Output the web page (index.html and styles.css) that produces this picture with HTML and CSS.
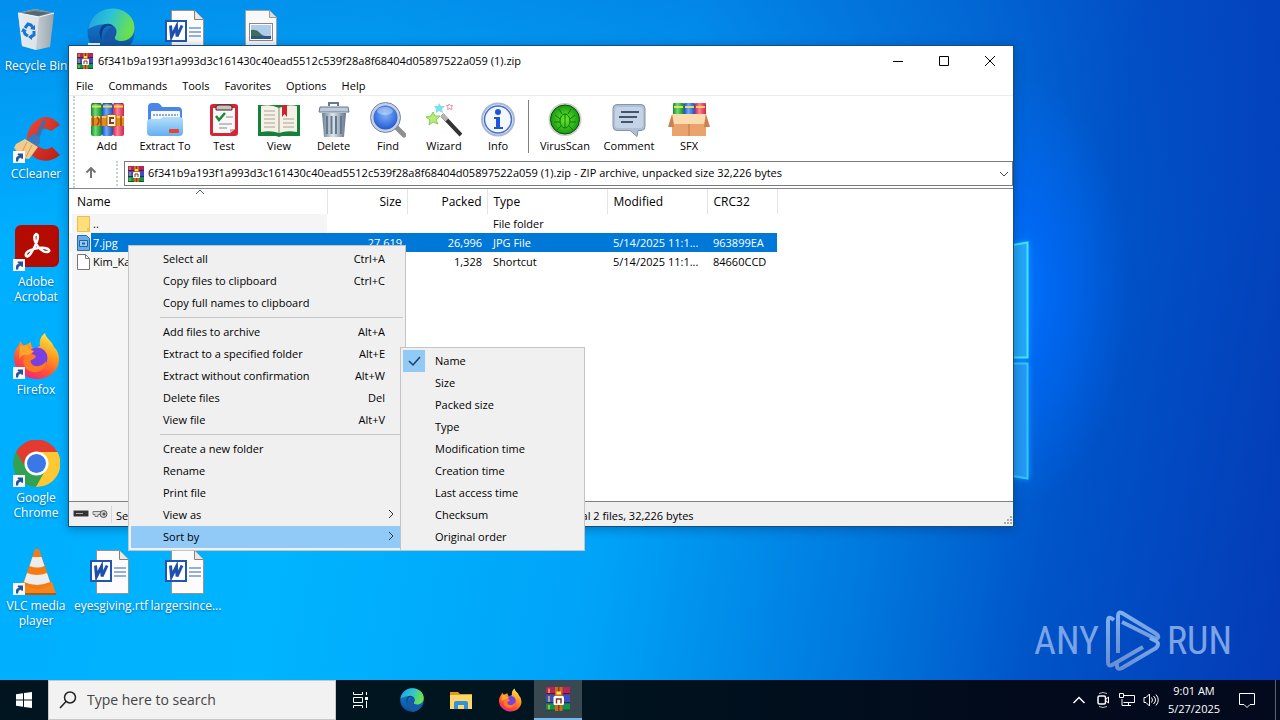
FILE: index.html
```html
<!DOCTYPE html>
<html lang="en">
<head>
<meta charset="utf-8">
<title>Desktop</title>
<link rel="stylesheet" href="styles.css">
</head>
<body>
<svg class="defs" width="0" height="0" aria-hidden="true">
  <defs>
    <linearGradient id="gEdgeA" x1="0" y1="0" x2="1" y2="0.3"><stop offset="0" stop-color="#1b9de2"/><stop offset=".5" stop-color="#2cc3d5"/><stop offset="1" stop-color="#6be04e"/></linearGradient>
    <linearGradient id="gEdgeB" x1="0" y1="0" x2="0" y2="1"><stop offset="0" stop-color="#1683d8"/><stop offset="1" stop-color="#0c4f9e"/></linearGradient>
    <linearGradient id="gFox" x1=".8" y1="0" x2=".3" y2="1"><stop offset="0" stop-color="#fff04a"/><stop offset=".4" stop-color="#ff9a1f"/><stop offset=".75" stop-color="#ff4a3c"/><stop offset="1" stop-color="#e8258a"/></linearGradient>
    <linearGradient id="gFolder" x1="0" y1="0" x2="0" y2="1"><stop offset="0" stop-color="#b5defc"/><stop offset="1" stop-color="#64b0f2"/></linearGradient>
    <linearGradient id="gMetal" x1="0" y1="0" x2="1" y2="0"><stop offset="0" stop-color="#6b7f93"/><stop offset=".45" stop-color="#dde7ef"/><stop offset="1" stop-color="#62758a"/></linearGradient>
    <radialGradient id="gLens" cx=".5" cy=".4" r=".6"><stop offset="0" stop-color="#7db4fb"/><stop offset="1" stop-color="#1b4fd0"/></radialGradient>
    <radialGradient id="gVirus"><stop offset="0" stop-color="#6dea2e"/><stop offset="1" stop-color="#12940f"/></radialGradient>
    <linearGradient id="gRed" x1="0" y1="0" x2="1" y2="1"><stop offset="0" stop-color="#f04a3a"/><stop offset="1" stop-color="#b71c13"/></linearGradient>
    <linearGradient id="gBin" x1="0" y1="0" x2="1" y2="0"><stop offset="0" stop-color="#dfe6ea"/><stop offset=".6" stop-color="#bcc6cc"/><stop offset="1" stop-color="#98a4ac"/></linearGradient>
    <linearGradient id="gMark" x1="0" y1="0" x2="0" y2="1"><stop offset="0" stop-color="#7fb0ee"/><stop offset="1" stop-color="#688fd4"/></linearGradient>
    <linearGradient id="gBookG" x1="0" y1="0" x2="1" y2="0"><stop offset="0" stop-color="#0f8a35"/><stop offset=".4" stop-color="#6bdc72"/><stop offset="1" stop-color="#0e8434"/></linearGradient>
    <linearGradient id="gBookB" x1="0" y1="0" x2="1" y2="0"><stop offset="0" stop-color="#1a4fc0"/><stop offset=".4" stop-color="#6fa9f6"/><stop offset="1" stop-color="#1d4fb8"/></linearGradient>
    <linearGradient id="gBookR" x1="0" y1="0" x2="1" y2="0"><stop offset="0" stop-color="#d4264a"/><stop offset=".4" stop-color="#f8829a"/><stop offset="1" stop-color="#d02546"/></linearGradient>
  </defs>

  <symbol id="rar" viewBox="0 0 16 16">
    <rect x="0" y="0" width="16" height="5" fill="#b8235a"/><rect x="0" y="4" width="16" height="1" fill="#6c1238"/>
    <rect x="0" y="5" width="16" height="6" fill="#3c4fc0"/><rect x="0" y="10" width="16" height="1" fill="#232a72"/>
    <rect x="0" y="11" width="16" height="5" fill="#15914a"/><rect x="0" y="15" width="16" height="1" fill="#0a5a2c"/>
    <path d="M2 1v3M2 6v4M2 12v3" stroke="#d8c23c" stroke-width="1"/>
    <rect x="6" y="0" width="5" height="16" fill="#c96c1e"/><path d="M8.500 0v4M8.500 12v4" stroke="#8c3b10"/>
    <rect x="5" y="6" width="7" height="6" rx="1" fill="#fff"/><path d="M7 11V8h3v3" fill="none" stroke="#8c2f1d" stroke-width="1"/><path d="M7 4h3" stroke="#fbe14a" stroke-width="2"/>
  </symbol>
  <symbol id="arrow" viewBox="0 0 12 12"><rect width="12" height="12" fill="#f8f8f8"/><path d="M3 10.500V8q0-3 3-3L4.500 3.500 5 2.500h5v5l-1 .5L7.500 6.500Q5 7.500 5 10.500z" fill="#24529c"/></symbol>
  <symbol id="edge" viewBox="0 0 48 48">
    <circle cx="24" cy="24" r="23.500" fill="url(#gEdgeB)"/>
    <path d="M1 21C3 9 13 .5 25 .5 38 .5 47.500 9 47.500 20c0 8-6 13-13 13-5 0-7-2-7-4 0-2 2-3 2-6 0-4-4-7-9-7C9 16 1 21 1 21z" fill="url(#gEdgeA)"/>
    <path d="M17 31c0-6 4-10 8-12 4 2 5 5 4 8-2 3-3 8 5 9 5 .5 8-1 11-3C40 43 32 47.500 26 47.500 20 45 17 39 17 31z" fill="#1559a8"/>
    <path d="M29 23q-3-6-9-5-7 3-5 15-5-9 0-15 5-4 10-1z" fill="#0a3f8c"/>
  </symbol>
  <symbol id="fox" viewBox="0 0 48 48">
    <path d="M47 27c0 12-10 20-22 20S2 38 2 26c0-6 2-10 5-13l1-4 4 5 7-4q-1 5 4 7l5-3c-1-6 1-10 5-13 1 5 5 7 7 10l2 4q5 5 5 12z" fill="url(#gFox)"/>
    <circle cx="25" cy="26" r="10.500" fill="#7a3fe0"/><path d="M13 23c4-3 8-1 11 1-1 4-7 3-5 7 3 5 11 4 15-2 0 9-7 12-13 11-8-1-12-9-8-17z" fill="#ff7a22"/>
    <path d="M8 14l7-1q1 4 7 6-3 4-7 4-5-1-8 4z" fill="#ffa42c"/>
  </symbol>
  <symbol id="word" viewBox="0 0 48 48">
    <path d="M13.500 2.500h23l9 9v34h-32z" fill="#fcfcfc" stroke="#9b9188"/><path d="M36.500 2.500v9h9" fill="#e8e8e8" stroke="#8c7f76"/>
    <path d="M31 20h12M31 24h12M31 28h12" stroke="#2f63b8" stroke-width="1"/>
    <rect x="8" y="13" width="20" height="20" fill="#fff" stroke="#2255b0" stroke-width="2"/>
    <path d="M12.500 17.500l1 11 5-10 .5 10 5-11" fill="none" stroke="#1d4fae" stroke-width="3"/>
  </symbol>
  <symbol id="books" viewBox="0 0 36 36">
    <rect x="2" y="1" width="11" height="33" rx="2" fill="url(#gBookG)"/><rect x="13" y="1" width="11" height="33" rx="2" fill="url(#gBookB)"/><rect x="24" y="1" width="11" height="33" rx="2" fill="url(#gBookR)"/>
    <path d="M3 4.500h9M14 4.500h9M25 4.500h9" stroke="#f3dc4d" stroke-width="2"/><path d="M3 1.500h9M14 1.500h9M25 1.500h9" stroke="#00000055"/>
    <path d="M2 14h33v10H2z" fill="#e08a20"/><path d="M2 15h33" stroke="#f9c55c" stroke-width="2"/><path d="M4 14v10M8 15q4 4 0 8M12 14v10M32 14v10" fill="none" stroke="#8f4a0a" stroke-width="1.500"/>
    <rect x="18" y="12.500" width="9" height="12" rx="1" fill="#fff3dc" stroke="#a85a10"/><path d="M25 16h-4v5h4" fill="none" stroke="#8d420e" stroke-width="2"/>
  </symbol>
</svg>

<div class="screen">
<main class="desktop">
  <svg class="glow" viewBox="0 0 16 240" aria-hidden="true">
    <path d="M0 4L15 1v116H0z" fill="#24a6f8"/><path d="M0 4L14.500 1.500V116.500H0" fill="none" stroke="#3fe4ff" stroke-width="2"/>
    <path d="M0 122h15v116L0 236z" fill="#2398f5"/><path d="M0 122.500h14.500V237.500L0 235" fill="none" stroke="#2fc6fa" stroke-width="2"/>
  </svg>

  <div class="icons">
    <div class="shortcut c1 r1"><svg class="pic" viewBox="0 0 48 48">
      <path d="M6 5l17-4 19 4-4 34-14 3-14-4z" fill="url(#gBin)"/><path d="M6 5l17-4 19 4-15 4z" fill="#7d8f9a"/><path d="M10 5l13-2 15 2-12 3z" fill="#536873"/><path d="M6 5l21 4-3 33-14-4z" fill="#e8eef2" fill-opacity=".7"/><path d="M6 5l21 4 15-4" fill="none" stroke="#f3f8fa"/>
      <path d="M13 20l3-4 3 1 2 3M22 23l0 4-3 2M16 28l-3-2-1-3" fill="none" stroke="#1677d0" stroke-width="3"/><path d="M18 21l5 1 0-5zM20 32l-4-3 4-3zM9 24l2-4 4 3z" fill="#1677d0"/></svg><span>Recycle Bin</span></div>
    <div class="shortcut c2 r1"><svg class="pic"><use href="#edge"/></svg><svg class="badge"><use href="#arrow"/></svg></div>
    <div class="shortcut c3 r1"><svg class="pic wd"><use href="#word"/></svg></div>
    <div class="shortcut c4 r1"><svg class="pic" viewBox="0 0 48 48"><path d="M8.500 2.500h24l7 7v36h-31z" fill="#f8f8f8" stroke="#a0a0a0"/><path d="M32.500 2.500v7h7" fill="#ddd" stroke="#999"/><rect x="12.500" y="15.500" width="23" height="17" fill="#fff" stroke="#888"/><rect x="14" y="17" width="20" height="14" fill="#aecdea"/><path d="M14 22q6-1 9 3t11 3v3H14z" fill="#3f6f5a"/><path d="M14 28h20v3H14z" fill="#31568c"/></svg></div>
    <div class="shortcut c1 r2"><svg class="pic" viewBox="0 0 48 48"><path d="M48 9L39 15q-6-5-12 0-6 7-1 15 6 6 14 1l8 8Q37 48 25 43 13 36 15 20 18 5 32 1q9-1 16 8z" fill="url(#gRed)"/><path d="M31 4l3 1-8 20-4-2z" fill="#3b6fae"/><path d="M21 18q8 1 7 9l-5 5-9-8z" fill="#3a79bb"/><path d="M13 23l13 8-9 12-6-1-9-10 2-4z" fill="#f4c98c"/><path d="M15 26l-6 12M20 29l-6 12" stroke="#d79c52"/></svg><svg class="badge"><use href="#arrow"/></svg><span>CCleaner</span></div>
    <div class="shortcut c1 r3"><svg class="pic" viewBox="0 0 48 48"><rect x="3" y="1" width="44" height="42" rx="6" fill="#b30b00"/><path d="M14 30c0-4 15-8 22-5 4 3-2 4-5 2C24 23 20 13 24 10c5 1-1 13-5 19-3 5-6 4-5 1z" fill="none" stroke="#fff" stroke-width="2.500"/></svg><svg class="badge"><use href="#arrow"/></svg><span>Adobe Acrobat</span></div>
    <div class="shortcut c1 r4"><svg class="pic"><use href="#fox"/></svg><svg class="badge"><use href="#arrow"/></svg><span>Firefox</span></div>
    <div class="shortcut c1 r5"><svg class="pic" viewBox="0 0 48 48"><circle cx="24.500" cy="23.500" r="23.500" fill="#33a152"/><path d="M4 12A23.500 23.500 0 0 1 45.500 12H24L15 29z" fill="#e33b2e"/><path d="M45.500 12A23.500 23.500 0 0 1 24 47l10-18L24 12z" fill="#fcc934"/><circle cx="24.500" cy="23.500" r="12" fill="#fff"/><circle cx="24.500" cy="23.500" r="9.500" fill="#3b78e7"/></svg><svg class="badge"><use href="#arrow"/></svg><span>Google Chrome</span></div>
    <div class="shortcut c1 r6"><svg class="pic" viewBox="0 0 48 48"><path d="M10 34h30l4 12H5z" fill="#f5861d"/><path d="M5 45h39v2H5z" fill="#b85a06"/><path d="M23 1h4l12 35q-5 5-14 5t-14-5z" fill="#f57c12"/><path d="M20.500 9h9l3 9q-7 3-15 0zM15 25q10 4 20 0l3 9q-13 6-26 0z" fill="#ededed"/></svg><svg class="badge"><use href="#arrow"/></svg><span>VLC media player</span></div>
    <div class="shortcut c2 r6"><svg class="pic wd"><use href="#word"/></svg><span>eyesgiving.rtf</span></div>
    <div class="shortcut c3 r6"><svg class="pic wd"><use href="#word"/></svg><span>largersince...</span></div>
  </div>

  <div class="watermark" aria-label="ANY RUN"><span>ANY</span>
    <svg viewBox="0 0 56 62" aria-hidden="true"><g fill="none" stroke="url(#gMark)" stroke-width="4" stroke-linejoin="round"><path d="M9 10Q3 5 3 11v41q0 5 4 3l31-18"/><path d="M13 43V6q0-5 4-3l33 20q6 4 1 6L17 12"/><path d="M12 53q-1 8 5 5l34-20q4-4 0-7l-6-3"/></g></svg>
    <span>RUN</span></div>

  <section class="window" aria-label="Archive">
    <header class="titlebar">
      <svg class="i16"><use href="#rar"/></svg>
      <h1>6f341b9a193f1a993d3c161430c40ead5512c539f28a8f68404d05897522a059 (1).zip</h1>
      <button aria-label="Minimize"><svg class="i12" viewBox="0 0 12 12"><path d="M1 6.500h10" stroke="#000"/></svg></button>
      <button aria-label="Maximize"><svg class="i12" viewBox="0 0 12 12"><path d="M1.500 1.500h9v9h-9z" fill="none" stroke="#000"/></svg></button>
      <button aria-label="Close"><svg class="i12" viewBox="0 0 12 12"><path d="M1 1l10 10M11 1L1 11" stroke="#000"/></svg></button>
    </header>
    <nav class="menubar"><button>File</button><button>Commands</button><button>Tools</button><button>Favorites</button><button>Options</button><button>Help</button></nav>
    <div class="bars">
    <div class="toolbar">
      <button><svg viewBox="0 0 36 36"><use href="#books"/></svg>Add</button>
      <button><svg viewBox="0 0 36 36"><path d="M1 5q0-4 4-4h5q3 0 5 4h16q4 0 4 4v18H1z" fill="#4a86ea"/><rect x="4" y="9" width="29" height="12" rx="1" fill="#f4f7fb"/><path d="M6 13h25" stroke="#9aa9ba" stroke-dasharray="2 1" stroke-width="2"/><path d="M0 20q0-3 4-3h9l3-2h16q4 0 4 4v11q0 4-4 4H4q-4 0-4-4z" fill="url(#gFolder)"/><rect x="22" y="27" width="10" height="4" rx="1" fill="#e8442e"/></svg>Extract To</button>
      <button><svg viewBox="0 0 36 36"><rect x="4" y="2" width="28" height="32" rx="3" fill="#d32537"/><path d="M7 6h22v21l-5 4H7z" fill="#f8f8f8"/><path d="M10 8V5q0-2 3-2h10q3 0 3 2v3z" fill="#c4c4c4" stroke="#4a2020"/><path d="M10 14l3 4 6-7" fill="none" stroke="#1b8a3a" stroke-width="2.500"/><path d="M20 15h7M13 22h13M13 26h8" stroke="#8b8b8b"/><path d="M29 27h-5v4z" fill="#bbb"/></svg>Test</button>
      <button><svg class="wide" viewBox="0 0 44 36"><path d="M1 3h42v31H25l-3 1-3-1H1z" fill="#15803a"/><path d="M4 4q10-2 18 2v25q-8-3-18-1zM40 4q-10-2-18 2v25q8-3 18-1z" fill="#f6f1e6"/><path d="M7 9h11M7 13h11M7 17h11M7 21h11M7 25h11M26 17h11M26 21h11M26 25h11" stroke="#a9a394"/><path d="M22 5v26" stroke="#8a8574"/><path d="M25 3h5v12l-2.500-3-2.500 3z" fill="#d0232d"/></svg>View</button>
      <button><svg viewBox="0 0 36 36"><path d="M6 11h24l-2 24H8z" fill="url(#gMetal)"/><path d="M11 14v18M15.500 14v18M20 14v18M25 14v18" stroke="#66788b" stroke-width="2"/><path d="M4 5h28l1 5H3z" fill="#bccada" stroke="#66788c"/><path d="M13 4V1h9v3" fill="none" stroke="#66788c" stroke-width="2"/></svg>Delete</button>
      <button><svg viewBox="0 0 36 36"><path d="M24 23l10 10" stroke="#8d8f94" stroke-width="5" stroke-linecap="round"/><circle cx="15.500" cy="15.500" r="13.500" fill="url(#gLens)" stroke="#c7d0dd" stroke-width="3"/><circle cx="15.500" cy="15.500" r="15" fill="none" stroke="#7186ab"/><ellipse cx="15" cy="9" rx="8" ry="4" fill="#fff" fill-opacity=".35"/></svg>Find</button>
      <button><svg viewBox="0 0 36 36"><path d="M16 13l19 20" stroke="#333" stroke-width="4"/><path d="M16 13l5 5" stroke="#b5b5b5" stroke-width="4"/><path d="M7 10l2 4 5 0-4 4 2 4-5-2-4 3 1-5-4-3 5-1z" fill="#b5ec7d" stroke="#85cf4c"/><path d="M13 1l2 3 4 0-3 3 1 4-4-2-3 2 0-4-2-3h4z" fill="#80dcf0"/><path d="M23 2l1.500 1.500h2l-1 2 .5 2-2.500-1-2 1 .5-2-1.500-2h2z" fill="none" stroke="#f28b98"/></svg>Wizard</button>
      <button><svg viewBox="0 0 36 36"><circle cx="18" cy="17.500" r="16" fill="#e3ebf8" stroke="#a9b9d4" stroke-width="2"/><circle cx="18" cy="17.500" r="13.500" fill="#f4f8fe" stroke="#4670cc" stroke-width="1.500"/><circle cx="18" cy="10" r="3" fill="#1f55d8"/><path d="M14 15h6v10h3v2H14v-2h2v-8h-2z" fill="#1f55d8"/></svg>Info</button>
      <i class="divider"></i>
      <button><svg viewBox="0 0 36 36"><circle cx="18" cy="17.500" r="15.500" fill="url(#gVirus)" stroke="#c9cfc9" stroke-width="2"/><circle cx="18" cy="17.500" r="14.500" fill="none" stroke="#0a4d0e"/><g stroke="#0b7a0d" stroke-width="1" fill="none"><ellipse cx="18" cy="19" rx="5" ry="7"/><path d="M18 12v14M13 17l-5-4M23 17l5-4M13 20H7M23 20h6M14 24l-4 4M22 24l4 4M15 12l-3-5M21 12l3-5"/></g></svg>VirusScan</button>
      <button><svg viewBox="0 0 36 36"><path d="M6 2.500h24q4 0 4 4v18q0 4-4 4h-3l-1 6-7-6H6q-4 0-4-4v-18q0-4 4-4z" fill="#aebfd6" stroke="#8395ad"/><rect x="4" y="5" width="28" height="21" rx="3" fill="#c5d3e6"/><path d="M10 10h18M8 15h18M10 20h12" stroke="#45546b" stroke-width="2"/></svg>Comment</button>
      <button><svg class="wide" viewBox="0 0 44 36"><rect x="6" y="1" width="11" height="14" rx="1" fill="url(#gBookG)"/><rect x="17" y="1" width="11" height="14" rx="1" fill="url(#gBookB)"/><rect x="28" y="1" width="11" height="14" rx="1" fill="url(#gBookR)"/><path d="M7 5h9M18 5h9M29 5h9" stroke="#f0d850" stroke-width="2"/><path d="M5 13h34v21H5z" fill="#eaa36c"/><path d="M5 12h34l-2 10H7z" fill="#fbdcae"/><path d="M5 12L1 25h6zM39 12l4 13h-6z" fill="#c9824d"/><path d="M22 22v12" stroke="#c0763f"/></svg>SFX</button>
    </div>
    <div class="address">
      <button class="up" aria-label="Up one level"><svg viewBox="0 0 12 12"><path d="M6 11V1M1.500 5.500L6 1l4.500 4.500" fill="none" stroke="#747474" stroke-width="2"/></svg></button>
      <div class="combo"><svg class="i16"><use href="#rar"/></svg>
        <select aria-label="Address"><option>6f341b9a193f1a993d3c161430c40ead5512c539f28a8f68404d05897522a059 (1).zip - ZIP archive, unpacked size 32,226 bytes</option></select>
        <svg class="chev" viewBox="0 0 10 10"><path d="M1 3l4 4 4-4" fill="none" stroke="#444"/></svg></div>
    </div>
    </div>
    <div class="list">
      <table>
        <colgroup><col class="w-name"><col class="w-num"><col class="w-num"><col class="w-type"><col class="w-mod"><col class="w-crc"></colgroup>
        <thead><tr><th>Name<svg class="sort" viewBox="0 0 10 6"><path d="M1 5l4-4 4 4" fill="none" stroke="#666"/></svg></th><th class="num">Size</th><th class="num">Packed</th><th>Type</th><th>Modified</th><th>CRC32</th></tr></thead>
        <tbody>
          <tr><td><div class="file"><svg viewBox="0 0 14 16"><path d="M.5.5h12v15H.5z" fill="#ffdf7c" stroke="#e8bd4a"/><path d="M10 12h3v4h-3z" fill="#f3c550"/></svg><span>..</span></div></td><td></td><td></td><td>File folder</td><td></td><td></td></tr>
          <tr class="selected"><td><div class="file"><svg viewBox="0 0 14 16"><path d="M.5.5h9l3 3v12H.5z" fill="#69ade8" stroke="#2b6cab"/><path d="M2.500 5.500h8v6h-8z" fill="#9acbf4" stroke="#2363a5"/><path d="M5 7.500h3v2H5z" fill="#2363a5"/></svg><span>7.jpg</span></div></td><td class="num">27,619</td><td class="num">26,996</td><td>JPG File</td><td>5/14/2025 11:1...</td><td>963899EA</td></tr>
          <tr><td><div class="file"><svg viewBox="0 0 14 16"><path d="M.5.5h8l4 4v11h-12z" fill="#fff" stroke="#777"/><path d="M8.500.5v4h4" fill="none" stroke="#777"/></svg><span>Kim_Ka</span></div></td><td></td><td class="num">1,328</td><td>Shortcut</td><td>5/14/2025 11:1...</td><td>84660CCD</td></tr>
        </tbody>
      </table>
    </div>
    <footer class="status">
      <svg class="drive" viewBox="0 0 16 8"><rect x=".5" y=".5" width="15" height="6" rx="1" fill="#333" stroke="#999"/><path d="M3 3.500h7" stroke="#aaa"/></svg>
      <svg class="key" viewBox="0 0 16 10"><path d="M1 2.500h8v3H6v2H3v-2H1z" fill="#ddd" stroke="#777"/><circle cx="11.500" cy="5" r="3.500" fill="#ccc" stroke="#555"/><circle cx="12" cy="5" r="1.500" fill="#555"/></svg>
      <span class="pane sel">Selected</span><span class="pane">Total 2 files, 32,226 bytes</span>
      <svg class="grip" viewBox="0 0 9 9"><path d="M7 1h2M4 4h2M7 4h2M1 7h2M4 7h2M7 7h2" stroke="#aaa" stroke-width="2"/></svg>
    </footer>
  </section>

  <div class="menu context" role="menu">
    <button role="menuitem">Select all<kbd>Ctrl+A</kbd></button>
    <button role="menuitem">Copy files to clipboard<kbd>Ctrl+C</kbd></button>
    <button role="menuitem">Copy full names to clipboard</button>
    <hr>
    <button role="menuitem">Add files to archive<kbd>Alt+A</kbd></button>
    <button role="menuitem">Extract to a specified folder<kbd>Alt+E</kbd></button>
    <button role="menuitem">Extract without confirmation<kbd>Alt+W</kbd></button>
    <button role="menuitem">Delete files<kbd>Del</kbd></button>
    <button role="menuitem">View file<kbd>Alt+V</kbd></button>
    <hr>
    <button role="menuitem">Create a new folder</button>
    <button role="menuitem">Rename</button>
    <button role="menuitem">Print file</button>
    <button role="menuitem" class="sub">View as<svg viewBox="0 0 8 8"><path d="M2 0l4 4-4 4" fill="none" stroke="#333"/></svg></button>
    <button role="menuitem" class="sub active">Sort by<svg viewBox="0 0 8 8"><path d="M2 0l4 4-4 4" fill="none" stroke="#333"/></svg></button>
  </div>
  <div class="menu submenu" role="menu">
    <button role="menuitemradio" aria-checked="true"><svg class="check" viewBox="0 0 22 22"><path d="M6 11l4 4 7-8" fill="none" stroke="#1c3f63" stroke-width="1.500"/></svg>Name</button>
    <button role="menuitemradio">Size</button><button role="menuitemradio">Packed size</button><button role="menuitemradio">Type</button><button role="menuitemradio">Modification time</button><button role="menuitemradio">Creation time</button><button role="menuitemradio">Last access time</button><button role="menuitemradio">Checksum</button><button role="menuitemradio">Original order</button>
  </div>
</main>

<footer class="taskbar">
  <button class="start" aria-label="Start"><svg viewBox="0 0 16 16"><path d="M0 2.200L7 1.200v6.300H0zM8 1l8-1v7.500H8zM0 8.500h7v6.300L0 13.800zM8 8.500h8V16l-8-1z" fill="#fff"/></svg></button>
  <label class="search"><svg viewBox="0 0 18 18"><circle cx="11" cy="6.500" r="5.500" fill="none" stroke="#222" stroke-width="1.500"/><path d="M7 10.500L1 17" stroke="#222" stroke-width="1.500"/></svg><input type="text" placeholder="Type here to search" aria-label="Search"></label>
  <button class="task view" aria-label="Task view"><svg class="i16" viewBox="0 0 16 16"><path d="M.5 0v2.500h9V0M.5 16v-2.500h9V16M.5 5.500h9v5h-9zM13.500 0v3M13.500 9v7" fill="none" stroke="#fff"/><path d="M12 5h3v3h-3z" fill="#fff"/></svg></button>
  <button class="task" aria-label="Edge"><svg><use href="#edge"/></svg></button>
  <button class="task" aria-label="Explorer"><svg viewBox="0 0 24 24"><path d="M1 4h8l2 2h12v4H1z" fill="#e39b1c"/><path d="M1 7h22v14H1z" fill="#ffd768"/><path d="M5 21v-6q0-2 2-2h10q2 0 2 2v6h-4v-4H9v4z" fill="#3092dc"/></svg></button>
  <button class="task" aria-label="Firefox"><svg><use href="#fox"/></svg></button>
  <button class="task open" aria-label="Archive"><svg><use href="#rar"/></svg></button>
  <div class="tray">
    <svg viewBox="0 0 16 16"><path d="M2.500 11L8 5.500l5.500 5.500" fill="none" stroke="#fff" stroke-width="1.500"/></svg>
    <svg viewBox="0 0 16 16"><path d="M4 1.500q4-2 8 0M4 14.500q4 2 8 0" fill="none" stroke="#bbb"/><rect x="3" y="4" width="7.500" height="8" rx="1.500" fill="none" stroke="#fff" stroke-width="1.500"/><path d="M11 7l2.500-2v6L11 9" fill="none" stroke="#fff"/></svg>
    <svg viewBox="0 0 16 16"><path d="M5 3.500h10.500v7H4.500M3 7v6.500h9M9.500 11v2.500" fill="none" stroke="#fff"/><path d="M.5 1.500h4v4h-4z" fill="none" stroke="#fff"/></svg>
    <svg viewBox="0 0 16 16"><path d="M1 5.500h2L6.500 2v12L3 10.500H1z" fill="none" stroke="#fff"/><path d="M8.500 5.500q2 2.500 0 5M10.500 4q4 4 0 8M13 2.500q4.500 5.500 0 11" fill="none" stroke="#fff"/></svg>
    <time><span>9:01 AM</span><span>5/27/2025</span></time>
    <svg class="note" viewBox="0 0 16 16"><path d="M.5 1.500h15v11H11L8 15.500 5 12.500H.5z" fill="none" stroke="#fff"/></svg>
    <i class="peek"></i>
  </div>
</footer>
</div>
</body>
</html>
```
FILE: styles.css
```css
* { box-sizing: border-box; }
body { margin: 0; font: 11px/15px "Open Sans", "Noto Sans", sans-serif; color: #000; }
button { font: inherit; color: inherit; background: none; border: 0; padding: 0; margin: 0; }
svg { display: block; flex: none; }
.defs { position: absolute; }
.i16 { width: 16px; height: 16px; }
.i12 { width: 12px; height: 12px; }

.screen { display: flex; flex-direction: column; height: 100vh; overflow: hidden; }
.desktop {
  position: relative; flex: 1; overflow: hidden;
  background:
    radial-gradient(ellipse 120px 220px at 1010px 290px, #0074ff 0%, #0068f6cc 40%, transparent 100%),
    linear-gradient(to bottom, #0838ba44, transparent 35%),
    linear-gradient(100deg, #00aeff 0%, #00b4ff 27%, #00a3f8 50%, #0076dc 70%, #0054c8 82%, #043ab6 100%);
}
.glow { position: absolute; left: 1013px; top: 241px; width: 16px; height: 240px; filter: drop-shadow(0 0 3px #1aa0ff); }

.icons { display: grid; grid-template-columns: repeat(4, 75px); grid-auto-rows: 108px; }
.shortcut { position: relative; display: flex; flex-direction: column; align-items: center; gap: 2px; padding: 8px 3px 0 0; color: #fff; text-align: center; font-size: 12px; text-shadow: 0 1px 2px #00305c99; }
.shortcut span { padding: 0 4px; }
.pic { width: 48px; height: 48px; }
.wd { margin-left: -8px; }
.badge { position: absolute; left: 13px; top: 43px; width: 12px; height: 12px; }
.c1 { grid-column: 1; } .c2 { grid-column: 2; } .c3 { grid-column: 3; } .c4 { grid-column: 4; }
.r1 { grid-row: 1; } .r2 { grid-row: 2; } .r3 { grid-row: 3; } .r4 { grid-row: 4; } .r5 { grid-row: 5; } .r6 { grid-row: 6; }

.watermark { position: absolute; right: 48px; bottom: 8px; display: flex; align-items: center; gap: 6px; color: #7ba4e6; font: 38px/62px "Roboto Condensed", "Liberation Sans Narrow", "Liberation Sans", sans-serif; }
.watermark svg { width: 56px; height: 62px; }

.window { position: absolute; left: 68px; top: 45px; width: 946px; height: 482px; display: flex; flex-direction: column; background: #fff; border: 1px solid #1c4b78; box-shadow: 0 2px 10px #00306066; }
.titlebar { display: flex; align-items: center; height: 30px; padding-left: 8px; }
.titlebar h1 { flex: 1; margin: 0; padding: 0 0 2px 5px; font-size: 11px; font-weight: 400; }
.titlebar button { display: grid; place-items: center; width: 46px; height: 28px; }
.menubar { display: flex; gap: 15px; height: 20px; padding: 0 7px; border-bottom: 1px solid #ececec; }
.bars { margin-left: 4px; border-left: 2px dotted #c4d4c8; }
.toolbar { display: grid; grid-template-columns: 54px 62px 56px 54px 55px 54px 58px 50px 11px 62px 66px 54px; height: 63px; padding: 6px 0 0 5px; }
.toolbar button { display: flex; flex-direction: column; align-items: center; }
.toolbar svg { width: 36px; height: 36px; }
.toolbar .wide { width: 44px; }
.divider { justify-self: center; height: 53px; margin-top: -2px; border-left: 1px solid #808080; }
.address { display: flex; height: 29px; padding: 2px 0; }
.up { display: grid; place-items: center; width: 43px; padding: 0 10px 2px 0; border-right: 2px dotted #c4d4c8; }
.up svg { width: 12px; height: 12px; }
.combo { position: relative; display: flex; flex: 1; align-items: center; height: 25px; margin-left: 6px; border: 1px solid #7a7a7a; }
.combo .i16 { position: absolute; left: 3px; pointer-events: none; }
.combo select { appearance: none; flex: 1; height: 100%; padding: 0 20px 2px 23px; border: 0; background: none; font: inherit; color: #000; }
.chev { position: absolute; right: 3px; width: 10px; height: 10px; pointer-events: none; }

.list { flex: 1; border-top: 1px solid #828790; background: linear-gradient(#f5f5f5, #f5f5f5) 3px 25px / 255px 100% no-repeat #fff; }
table { table-layout: fixed; width: 708px; border-collapse: collapse; }
.w-name { width: 258px; } .w-num { width: 80px; } .w-type { width: 120px; } .w-mod { width: 100px; } .w-crc { width: 70px; }
th { position: relative; height: 25px; padding: 0 6px; border-right: 1px solid #e4e4e4; font-weight: 400; font-size: 12px; text-align: left; }
th:first-child { padding-left: 8px; }
.sort { position: absolute; left: 126px; top: 0; width: 10px; height: 6px; }
td { height: 19px; padding: 0 6px; line-height: 19px; white-space: nowrap; }
.num { text-align: right; padding-right: 5px; }
td:first-child { padding: 0 0 0 8px; }
.file { display: flex; align-items: center; height: 19px; }
.file svg { width: 14px; height: 16px; }
.file span { flex: 1; padding-left: 2px; }
.selected td { background: #0078d7; color: #fff; }
.selected td:first-child { background: linear-gradient(90deg, #f5f5f5 22px, #0078d7 22px); }

.status { position: relative; display: flex; align-items: center; height: 25px; padding-left: 4px; background: #f0f0f0; border-top: 1px solid #828282; }
.drive { width: 16px; height: 8px; }
.key { width: 16px; height: 10px; margin: 0 3px; }
.pane { padding: 2px 4px 0; border-left: 1px solid #d6d6d6; }
.sel { width: 449px; }
.grip { position: absolute; right: 1px; bottom: 1px; width: 9px; height: 9px; }

.menu { position: absolute; display: flex; flex-direction: column; padding: 2px; background: #f0f0f0; border: 1px solid #c4c4c4; }
.context { left: 128px; top: 245px; width: 278px; }
.submenu { left: 400px; top: 347px; width: 185px; }
.menu button { position: relative; display: flex; align-items: center; justify-content: space-between; height: 22px; padding: 0 18px 2px 32px; }
.menu hr { width: 243px; height: 1px; margin: 3px 0 3px 29px; border: 0; background: #c6c6c6; }
.menu kbd { font: inherit; }
.menu .sub { padding-right: 8px; }
.menu .sub svg { width: 8px; height: 8px; }
.menu .active { background: #91c9f7; }
.menu .check { position: absolute; left: 0; top: 0; width: 22px; height: 22px; background: #91c9f7; }

.taskbar { display: flex; height: 40px; background: linear-gradient(90deg, #00151f 40%, #020a1c 80%, #030a1e); color: #fff; }
.start { display: grid; place-items: center; width: 48px; }
.start svg { width: 16px; height: 16px; }
.search { display: flex; align-items: center; width: 288px; padding-left: 10px; gap: 10px; background: #f2f2f2; border: 1px solid #c8c8c8; }
.search svg { width: 18px; height: 18px; }
.search input { flex: 1; min-width: 0; border: 0; padding: 0; background: none; font: 14px/20px "Open Sans", sans-serif; }
.search input::placeholder { color: #444; opacity: 1; }
.task { display: grid; place-items: center; width: 49px; }
.task.view { margin-right: 2px; }
.task svg { width: 24px; height: 24px; }
.task .i16 { width: 16px; height: 16px; }
.task.open { width: 48px; background: #3a4852; border-bottom: 2px solid #76b9ed; }
.tray { display: flex; align-items: center; gap: 8px; margin-left: auto; }
.tray svg { width: 16px; height: 16px; }
time { display: flex; flex-direction: column; width: 54px; line-height: 18px; text-align: center; }
.tray .note { margin: 0 4px 0 10px; }
.peek { align-self: stretch; width: 5px; margin-left: 8px; border-left: 1px solid #5a6270; }
```
